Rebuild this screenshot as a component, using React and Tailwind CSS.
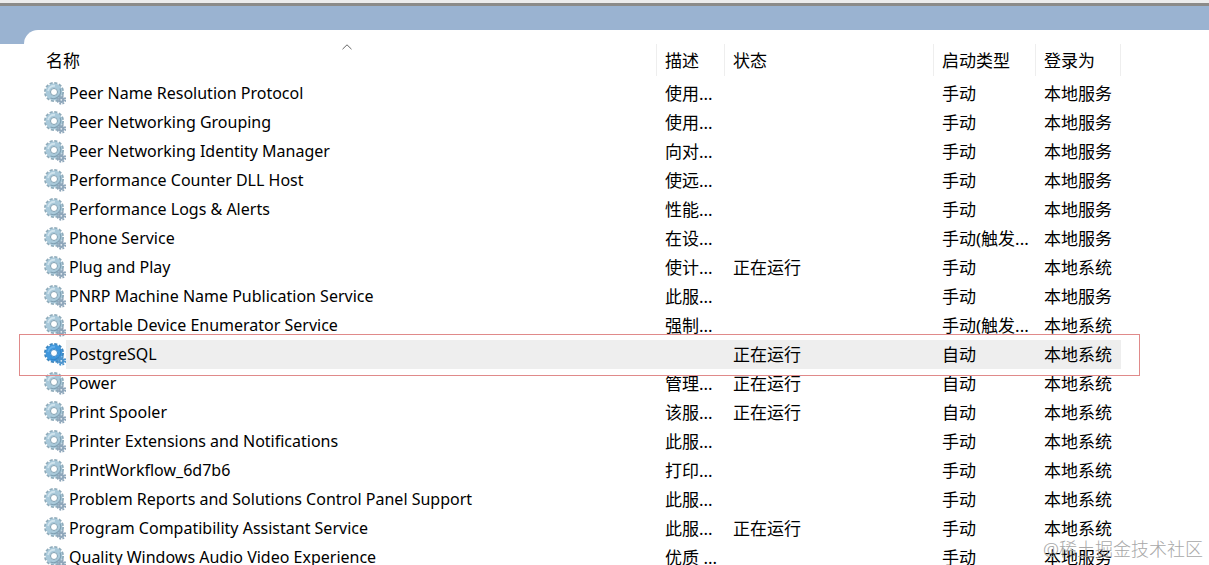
const COLUMNS = [
  { key: 'description', label: '描述', width: 'w-[68px]' },
  { key: 'status', label: '状态', width: 'w-[209px]' },
  { key: 'startup', label: '启动类型', width: 'w-[102px]' },
  { key: 'logon', label: '登录为', width: 'w-[85px]' },
];

const SERVICES = [
  { name: 'Peer Name Resolution Protocol', description: '使用...', status: '', startup: '手动', logon: '本地服务' },
  { name: 'Peer Networking Grouping', description: '使用...', status: '', startup: '手动', logon: '本地服务' },
  { name: 'Peer Networking Identity Manager', description: '向对...', status: '', startup: '手动', logon: '本地服务' },
  { name: 'Performance Counter DLL Host', description: '使远...', status: '', startup: '手动', logon: '本地服务' },
  { name: 'Performance Logs & Alerts', description: '性能...', status: '', startup: '手动', logon: '本地服务' },
  { name: 'Phone Service', description: '在设...', status: '', startup: '手动(触发...', logon: '本地服务' },
  { name: 'Plug and Play', description: '使计...', status: '正在运行', startup: '手动', logon: '本地系统' },
  { name: 'PNRP Machine Name Publication Service', description: '此服...', status: '', startup: '手动', logon: '本地服务' },
  { name: 'Portable Device Enumerator Service', description: '强制...', status: '', startup: '手动(触发...', logon: '本地系统' },
  { name: 'PostgreSQL', description: '', status: '正在运行', startup: '自动', logon: '本地系统', selected: true },
  { name: 'Power', description: '管理...', status: '正在运行', startup: '自动', logon: '本地系统' },
  { name: 'Print Spooler', description: '该服...', status: '正在运行', startup: '自动', logon: '本地系统' },
  { name: 'Printer Extensions and Notifications', description: '此服...', status: '', startup: '手动', logon: '本地系统' },
  { name: 'PrintWorkflow_6d7b6', description: '打印...', status: '', startup: '手动', logon: '本地系统' },
  { name: 'Problem Reports and Solutions Control Panel Support', description: '此服...', status: '', startup: '手动', logon: '本地系统' },
  { name: 'Program Compatibility Assistant Service', description: '此服...', status: '正在运行', startup: '手动', logon: '本地系统' },
  { name: 'Quality Windows Audio Video Experience', description: '优质 ...', status: '', startup: '手动', logon: '本地服务' },
];

function ServiceIcon({ selected }) {
  const c = selected
    ? { teeth: '#3f86bd', body: '#3f97dd', rim: '#3583c4', shine: '#62aeea', small: '#4b93cc' }
    : { teeth: '#8fabba', body: '#a9c9da', rim: '#7f9fb1', shine: '#cfe3ed', small: '#8ea6ba' };

  return (
    <svg className="h-[23px] w-[22px] shrink-0" viewBox="0 0 22 23" fill="none" aria-hidden="true">
      {/* Large gear */}
      <circle cx="10" cy="10" r="8.7" stroke={c.teeth} strokeWidth="2.6" strokeDasharray="3 1.555" />
      <circle cx="10" cy="10" r="5.9" stroke={c.body} strokeWidth="5" />
      <path d="M4 9a6.300 6.300 0 0 1 7-5.200" stroke={c.shine} strokeWidth="1.8" />
      <path d="M16 6.500a7.200 7.200 0 0 1-9.500 9.500" stroke={c.rim} strokeWidth="1.100" />
      <circle cx="10" cy="10" r="3.500" fill="#fff" stroke={c.rim} strokeWidth="1" />
      {/* Small gear */}
      <circle cx="17.300" cy="17.800" r="3.900" stroke={c.small} strokeWidth="2" strokeDasharray="1.800 1.263" />
      <circle cx="17.300" cy="17.800" r="2" fill="#e6eef4" stroke={c.small} strokeWidth="2.200" />
    </svg>
  );
}

function ServiceRow({ service }) {
  const { name, selected } = service;
  const background = selected ? 'bg-[#eeeeee]' : '';

  return (
    <tr className="relative h-[29px]" aria-selected={Boolean(selected)}>
      <td className="p-0 pl-1.5">
        <div className="flex h-[29px] items-center">
          <ServiceIcon selected={selected} />
          <span className={`h-[29px] flex-1 pl-[3px] leading-[29px] ${background}`}>{name}</span>
        </div>
        {selected && (
          <div className="pointer-events-none absolute -inset-x-[19px] -top-1.5 -bottom-[7px] z-10 border border-[#e08a8a]" />
        )}
      </td>
      {COLUMNS.map((column) => (
        <td key={column.key} className={`p-0 pl-2 text-[17px] leading-[29px] ${background}`}>
          {service[column.key]}
        </td>
      ))}
    </tr>
  );
}

export default function App() {
  return (
    <div className="relative h-screen overflow-hidden bg-white font-['Noto_Sans','Noto_Sans_CJK_SC',sans-serif] text-base text-black">
      {/* Window edge */}
      <div className="h-[3px] bg-[#ececec]" />
      <div className="h-[3px] bg-[#8b8b89]" />
      <div className="bg-[#9ab3d1] pt-6 pl-6">
        <div className="h-3.5 rounded-tl-[14px] bg-white" />
      </div>

      {/* Service list */}
      <main className="pr-[88px] pl-[38px]">
        <table className="w-full table-fixed border-collapse whitespace-nowrap">
          <thead>
            <tr>
              <th className="p-0 pb-[3px] text-left font-normal" aria-sort="ascending">
                <button className="relative block h-8 w-full border-r border-[#eeeeee] pt-0.5 pl-2 text-left text-[17px]">
                  名称
                  <svg className="absolute top-0 left-1/2 h-1.5 w-2.5 -translate-x-1/2" viewBox="0 0 10 6" fill="none" aria-hidden="true">
                    <path d="M.5 5.200 5 .8l4.500 4.400" stroke="#666" />
                  </svg>
                </button>
              </th>
              {COLUMNS.map((column) => (
                <th key={column.key} className={`p-0 pb-[3px] font-normal ${column.width}`}>
                  <button className="block h-8 w-full border-r border-[#eeeeee] pt-0.5 pl-2 text-left text-[17px]">
                    {column.label}
                  </button>
                </th>
              ))}
            </tr>
          </thead>
          <tbody>
            {SERVICES.map((service) => (
              <ServiceRow key={service.name} service={service} />
            ))}
          </tbody>
        </table>
      </main>

      <div className="absolute right-1.5 bottom-1 text-lg leading-6 font-light text-[#a8a8a8]">@稀土掘金技术社区</div>
    </div>
  );
}
